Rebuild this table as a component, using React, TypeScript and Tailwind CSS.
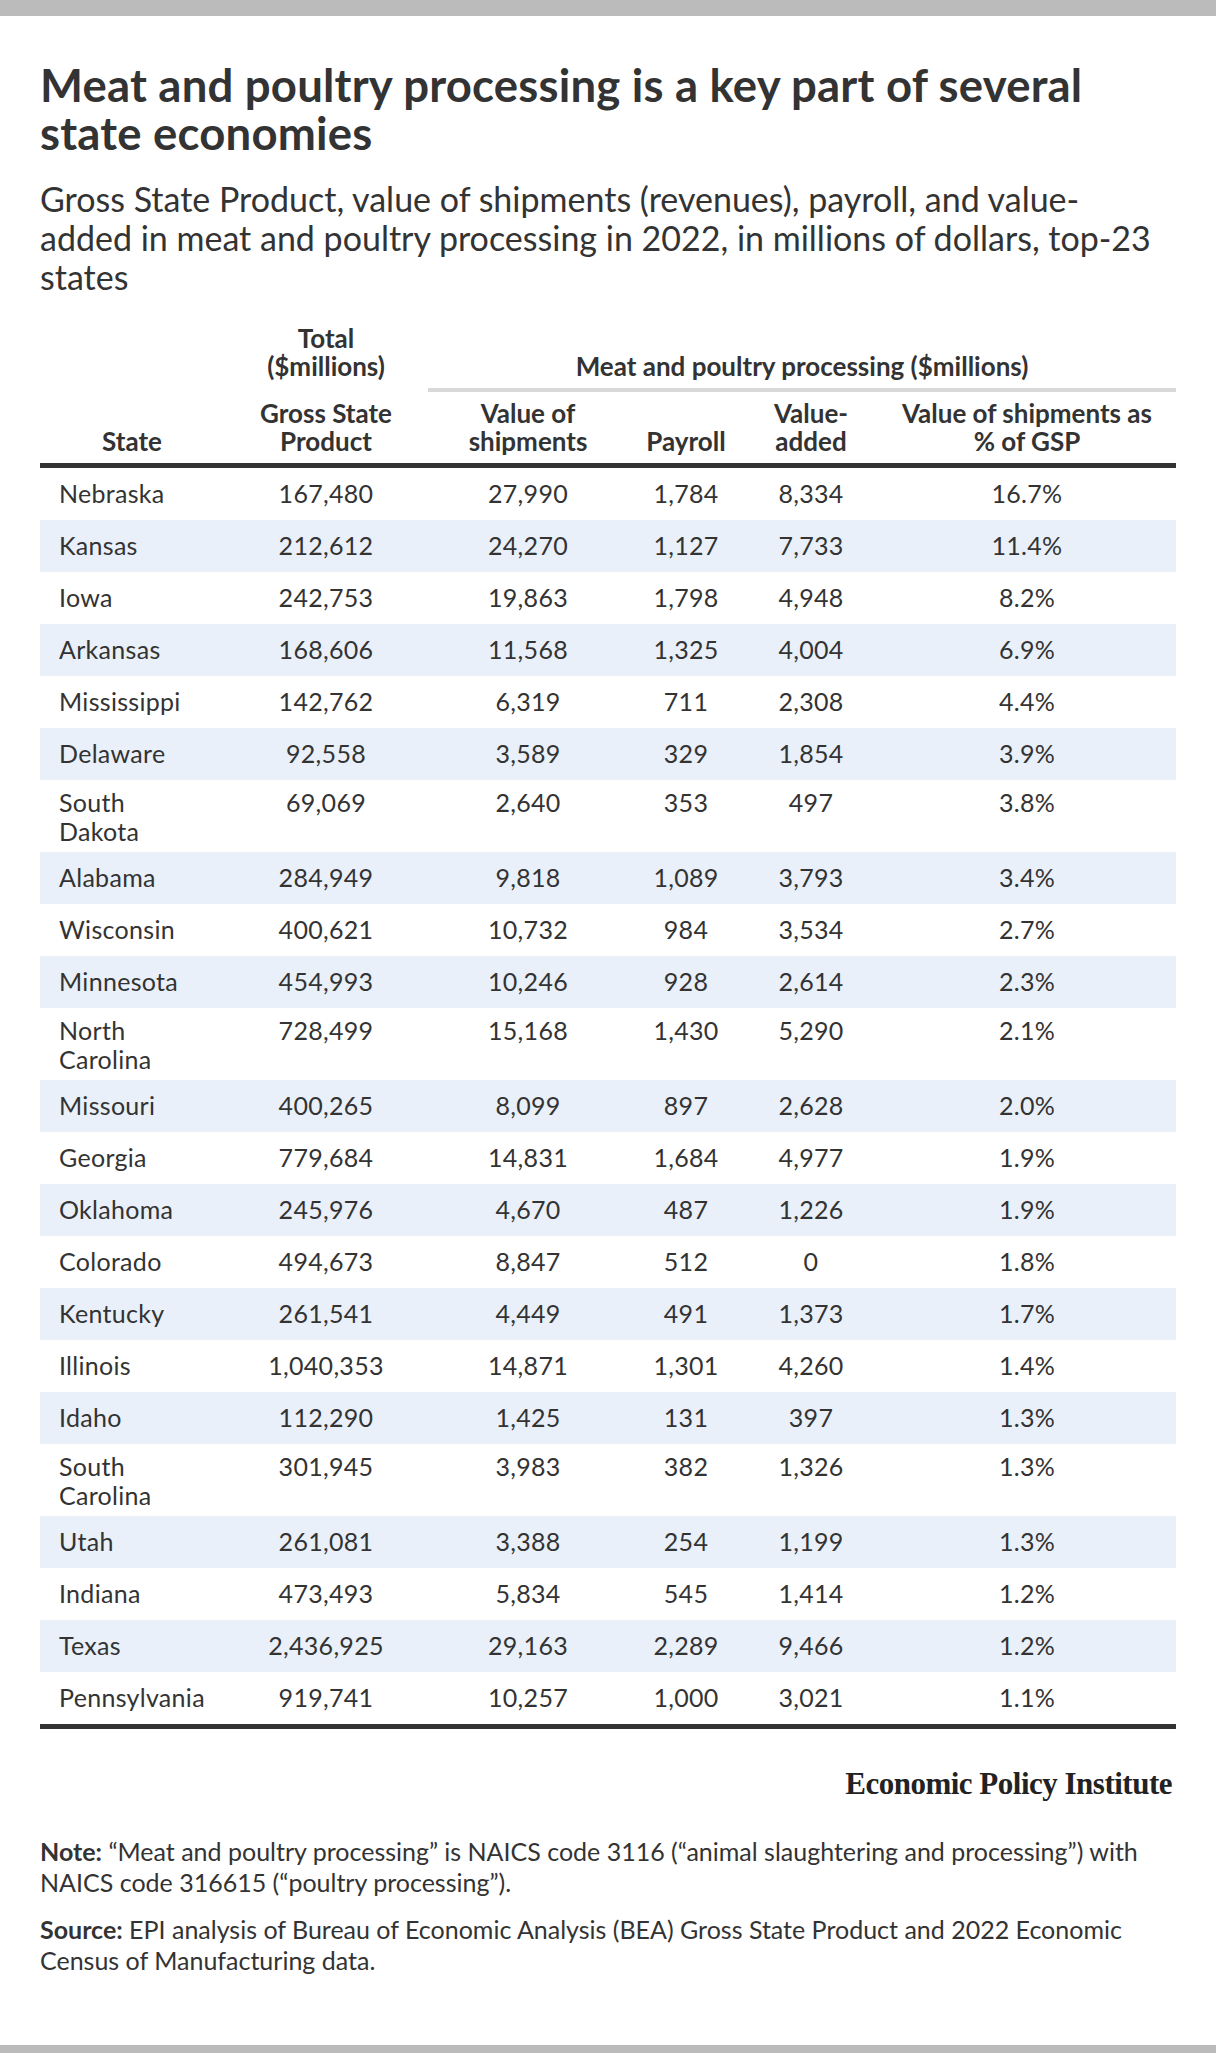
import React from 'react';

type Row = [string, string, string, string, string, string];

const rows: Row[] = [
  ['Nebraska', '167,480', '27,990', '1,784', '8,334', '16.7%'],
  ['Kansas', '212,612', '24,270', '1,127', '7,733', '11.4%'],
  ['Iowa', '242,753', '19,863', '1,798', '4,948', '8.2%'],
  ['Arkansas', '168,606', '11,568', '1,325', '4,004', '6.9%'],
  ['Mississippi', '142,762', '6,319', '711', '2,308', '4.4%'],
  ['Delaware', '92,558', '3,589', '329', '1,854', '3.9%'],
  ['South\nDakota', '69,069', '2,640', '353', '497', '3.8%'],
  ['Alabama', '284,949', '9,818', '1,089', '3,793', '3.4%'],
  ['Wisconsin', '400,621', '10,732', '984', '3,534', '2.7%'],
  ['Minnesota', '454,993', '10,246', '928', '2,614', '2.3%'],
  ['North\nCarolina', '728,499', '15,168', '1,430', '5,290', '2.1%'],
  ['Missouri', '400,265', '8,099', '897', '2,628', '2.0%'],
  ['Georgia', '779,684', '14,831', '1,684', '4,977', '1.9%'],
  ['Oklahoma', '245,976', '4,670', '487', '1,226', '1.9%'],
  ['Colorado', '494,673', '8,847', '512', '0', '1.8%'],
  ['Kentucky', '261,541', '4,449', '491', '1,373', '1.7%'],
  ['Illinois', '1,040,353', '14,871', '1,301', '4,260', '1.4%'],
  ['Idaho', '112,290', '1,425', '131', '397', '1.3%'],
  ['South\nCarolina', '301,945', '3,983', '382', '1,326', '1.3%'],
  ['Utah', '261,081', '3,388', '254', '1,199', '1.3%'],
  ['Indiana', '473,493', '5,834', '545', '1,414', '1.2%'],
  ['Texas', '2,436,925', '29,163', '2,289', '9,466', '1.2%'],
  ['Pennsylvania', '919,741', '10,257', '1,000', '3,021', '1.1%'],
];

const cols = 'grid grid-cols-[184px_204px_200px_116px_134px_1fr]';

const TableRow: React.FC<{ row: Row; shaded: boolean }> = ({ row, shaded }) => {
  const double = row[0].includes('\n');
  return (
    <div
      className={`${cols} items-start ${
        double ? 'h-[72px] pt-[8px] leading-[29px]' : 'h-[52px] pt-[12px] leading-[27px]'
      } ${shaded ? 'bg-[#e9f0f9]' : 'bg-white'}`}
    >
      <div className="pl-[19px] whitespace-pre-line">{row[0]}</div>
      {row.slice(1).map((v, i) => (
        <div key={i} className="text-center">
          {v}
        </div>
      ))}
    </div>
  );
};

export default function App() {
  return (
    <div className="w-[1216px] bg-white text-[#333333] font-['Lato',sans-serif]">
      <div className="h-4 bg-[#bbbbbb]" />

      <div className="px-10 pt-[45px]">
        {/* Title */}
        <h1 className="text-[45.5px] leading-[48px] font-bold tracking-[0.2px] pr-10">
          Meat and poultry processing is a key part of several state economies
        </h1>
        <p className="mt-[22px] text-[34px] leading-[39px] pr-2">
          Gross State Product, value of shipments (revenues), payroll, and value-added in meat and poultry processing in
          2022, in millions of dollars, top-23 states
        </p>

        {/* Table */}
        <div className="mt-[28px] text-[25px] tracking-[0.3px]">
          <div className={`${cols} items-end font-bold text-[26px] leading-[28px] tracking-normal`}>
            <div />
            <div className="text-center">
              Total
              <br />
              ($millions)
            </div>
            <div className="col-span-4 text-center">Meat and poultry processing ($millions)</div>
          </div>
          <div className={cols}>
            <div className="col-span-2" />
            <div className="col-span-4 h-1 mt-2 bg-[#d9d9d9]" />
          </div>
          <div className={`${cols} items-end font-bold text-[26px] leading-[28px] tracking-normal mt-[7px] pb-2`}>
            <div className="text-center">State</div>
            <div className="text-center">
              Gross State
              <br />
              Product
            </div>
            <div className="text-center">
              Value of
              <br />
              shipments
            </div>
            <div className="text-center">Payroll</div>
            <div className="text-center">
              Value-
              <br />
              added
            </div>
            <div className="text-center">
              Value of shipments as
              <br />% of GSP
            </div>
          </div>
          <div className="h-[5px] bg-[#333333]" />

          {rows.map((r, i) => (
            <TableRow key={r[0]} row={r} shaded={i % 2 === 1} />
          ))}
          <div className="h-[5px] bg-[#333333]" />
        </div>

        {/* Logo */}
        <div className="mt-[39px] flex justify-end pr-1">
          <span className="font-['Liberation_Serif',serif] font-bold text-[31px] leading-[32px] tracking-[-0.5px] text-[#222222]">
            Economic Policy Institute
          </span>
        </div>

        {/* Notes */}
        <div className="mt-9 text-[25px] leading-[31px]">
          <p>
            <span className="font-bold">Note:</span> “Meat and poultry processing” is NAICS code 3116 (“animal
            slaughtering and processing”) with NAICS code 316615 (“poultry processing”).
          </p>
          <p className="mt-4">
            <span className="font-bold">Source:</span> EPI analysis of Bureau of Economic Analysis (BEA) Gross State
            Product and 2022 Economic Census of Manufacturing data.
          </p>
        </div>
      </div>

      <div className="mt-[69px] h-4 bg-[#bbbbbb]" />
    </div>
  );
}
